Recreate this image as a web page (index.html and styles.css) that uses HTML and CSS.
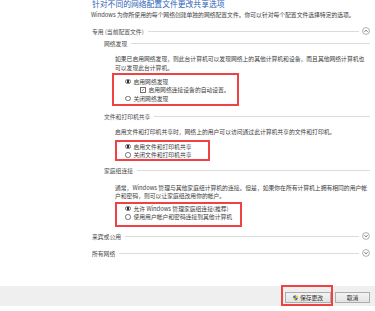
FILE: index.html
```html
<!DOCTYPE html>
<html lang="zh-CN">
  <head>
    <meta charset="UTF-8" />
    <meta name="viewport" content="width=device-width, initial-scale=1.0" />
    <title>高级共享设置</title>
    <link rel="stylesheet" href="styles.css">
  </head>
  <body>
    <div class="page">
      <h1 class="title">针对不同的网络配置文件更改共享选项</h1>
      <p class="intro">Windows 为你所使用的每个网络创建单独的网络配置文件。你可以针对每个配置文件选择特定的选项。</p>

      <div class="profile-head">
        <span>专用 (当前配置文件)</span>
        <span class="rule"></span>
        <svg class="toggle" viewBox="0 0 8 8"><circle cx="4" cy="4" r="3.4" /><path d="M2.5 4.7 L4 3.2 L5.5 4.7" /></svg>
      </div>

      <div class="group">
        <div class="group-head"><span>网络发现</span><span class="rule"></span></div>
        <p class="note note-discovery">如果已启用网络发现，则此台计算机可以发现网络上的其他计算机和设备，而且其他网络计算机也<br>可以发现此台计算机。</p>
        <div class="choices box-discovery">
          <div class="option"><span class="radio checked"></span>启用网络发现</div>
          <div class="option sub">
            <span class="check"><svg viewBox="0 0 6 6"><path d="M1.2 3.1 L2.5 4.4 L4.9 1.4" /></svg></span>启用网络连接设备的自动设置。
          </div>
          <div class="option"><span class="radio"></span>关闭网络发现</div>
        </div>
      </div>

      <div class="group group-share">
        <div class="group-head"><span>文件和打印机共享</span><span class="rule"></span></div>
        <p class="note note-share">启用文件和打印机共享时，网络上的用户可以访问通过此计算机共享的文件和打印机。</p>
        <div class="choices box-share">
          <div class="option"><span class="radio checked"></span>启用文件和打印机共享</div>
          <div class="option"><span class="radio"></span>关闭文件和打印机共享</div>
        </div>
      </div>

      <div class="group group-home">
        <div class="group-head"><span>家庭组连接</span><span class="rule"></span></div>
        <p class="note note-home">通常，Windows 管理与其他家庭组计算机的连接。但是，如果你在所有计算机上拥有相同的用户帐<br>户和密码，则可以让家庭组改用你的帐户。</p>
        <div class="choices box-home">
          <div class="option"><span class="radio checked"></span>允许 Windows 管理家庭组连接(推荐)</div>
          <div class="option"><span class="radio"></span>使用用户帐户和密码连接到其他计算机</div>
        </div>
      </div>

      <div class="profile-head guest">
        <span>来宾或公用</span>
        <span class="rule"></span>
        <svg class="toggle" viewBox="0 0 8 8"><circle cx="4" cy="4" r="3.4" /><path d="M2.5 3.3 L4 4.8 L5.5 3.3" /></svg>
      </div>
      <div class="profile-head all">
        <span>所有网络</span>
        <span class="rule"></span>
        <svg class="toggle" viewBox="0 0 8 8"><circle cx="4" cy="4" r="3.4" /><path d="M2.5 3.3 L4 4.8 L5.5 3.3" /></svg>
      </div>
    </div>

    <div class="footer">
      <div class="mark">
        <button class="btn save">
          <svg class="shield" viewBox="0 0 6 7">
            <path d="M3 0.3 L5.6 1.1 L5.6 3.4 C5.6 5 4.4 6 3 6.7 C1.6 6 0.4 5 0.4 3.4 L0.4 1.1 Z" fill="#f2c21a" />
            <path d="M3 0.3 L3 3.4 L0.4 3.4 L0.4 1.1 Z" fill="#2d6fd2" />
            <path d="M3 3.4 L5.6 3.4 C5.6 5 4.4 6 3 6.7 Z" fill="#2d6fd2" />
          </svg>保存更改
        </button>
      </div>
      <button class="btn cancel">取消</button>
    </div>
  </body>
</html>
```

FILE: styles.css
```css
body {
  margin: 0;
  background-color: #ffffff;
  color: #3c3c3c;
  font-family: "Noto Sans CJK SC", "Noto Sans", sans-serif;
  font-size: 5.8px;
  overflow: hidden;
}
.page {
  padding: 0 5px 0 92px;
}
.title {
  margin: 0;
  font-size: 7.8px;
  line-height: 8px;
  font-weight: normal;
  color: #2d62b8;
}
.intro {
  margin: 3px 0 0 -1px;
  line-height: 8px;
}
.profile-head {
  display: flex;
  align-items: center;
  height: 10px;
  margin-top: 7px;
  color: #4a4a4a;
}
.profile-head.guest {
  margin-top: 4px;
}
.rule {
  flex: 1;
  height: 1px;
  margin: 0 3px 0 4px;
  background-color: #dcdcdc;
}
.toggle {
  width: 8px;
  height: 8px;
  fill: none;
  stroke: #8c8c8c;
  stroke-width: 0.7;
}
.toggle path {
  stroke: #3a3a3a;
  stroke-width: 0.8;
}
.group {
  margin-left: 12px;
}
.group-head {
  display: flex;
  align-items: center;
  height: 10px;
  margin-top: 2px;
  color: #4a4a4a;
}
.group-share .group-head {
  margin-top: 5px;
}
.group-home .group-head {
  margin-top: 4px;
}
.group-head .rule {
  margin-right: 0;
}
.note {
  margin: 6px 0 0 11px;
  line-height: 9px;
}
.note-home {
  margin-top: 8.5px;
  line-height: 8.5px;
}
.choices {
  box-sizing: border-box;
  border: 2px solid #ee4245;
}
.box-discovery {
  width: 127px;
  margin: 1px 0 0 8px;
  padding: 2px 0 1.5px 11px;
}
.box-share {
  width: 95px;
  margin: 4px 0 0 11px;
  padding: 0 0 0 8px;
}
.box-home {
  width: 127px;
  margin: 1.5px 0 0 11px;
  padding: 0 0 4px 8px;
}
.option {
  display: flex;
  align-items: center;
  gap: 3px;
  height: 8.5px;
  white-space: nowrap;
}
.option.sub {
  padding-left: 15px;
}
.radio {
  box-sizing: border-box;
  width: 5.5px;
  height: 5.5px;
  border: 0.6px solid #707070;
  border-radius: 50%;
  background-color: #ffffff;
}
.radio.checked {
  background: radial-gradient(circle, #2a2a2a 0 1.1px, #ffffff 1.4px);
}
.check {
  box-sizing: border-box;
  width: 5.5px;
  height: 5.5px;
  border: 0.6px solid #707070;
  background-color: #ffffff;
}
.check svg {
  display: block;
  width: 100%;
  height: 100%;
  fill: none;
  stroke: #222;
  stroke-width: 0.9;
}
.footer {
  display: flex;
  justify-content: flex-end;
  align-items: flex-start;
  gap: 2px;
  height: 20px;
  margin-top: 28px;
  padding-right: 5px;
  background-color: #efefef;
}
.mark {
  box-sizing: border-box;
  height: 21px;
  margin-top: -1px;
  padding: 5px 0 1px 2px;
  border: 2px solid #ee4245;
}
.btn {
  box-sizing: border-box;
  display: flex;
  align-items: center;
  justify-content: center;
  gap: 2px;
  height: 11px;
  padding: 0;
  border: 1px solid #adadad;
  background: linear-gradient(#f3f3f3, #e3e3e3);
  color: #333;
  font: inherit;
  line-height: 1;
}
.save {
  width: 46px;
}
.cancel {
  width: 35px;
  margin-top: 6px;
}
.shield {
  width: 5px;
  height: 6px;
}
```
